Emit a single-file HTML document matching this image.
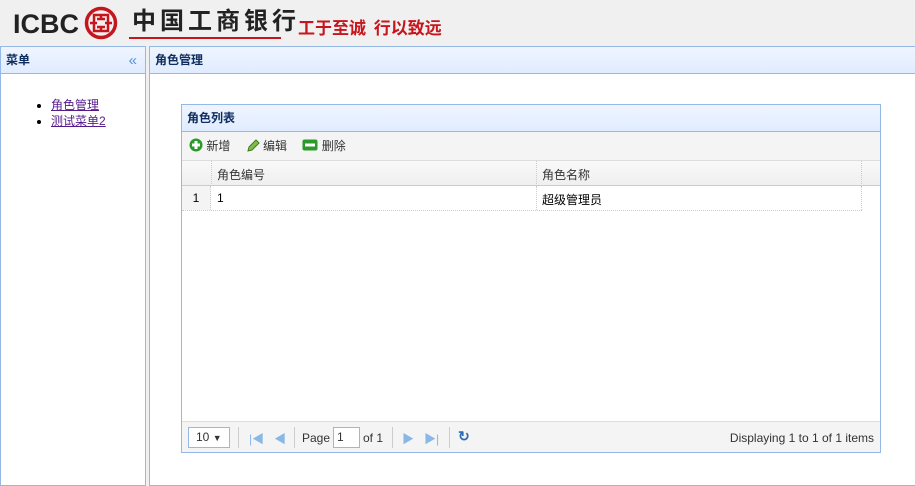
<!DOCTYPE html><html><head><meta charset="utf-8"><style>
*{box-sizing:border-box;margin:0;padding:0}
body{width:915px;height:475px;background:#f0f0f0;font-family:"Liberation Sans","Noto Sans CJK SC",sans-serif;font-size:12px;color:#000;position:relative;overflow:hidden}
.abs{position:absolute}
.ph{background:linear-gradient(#eff5ff,#e0ecff);border-bottom:1px solid #95b8e7;height:27px;line-height:27px;padding-left:5px;font-weight:bold;font-size:12px;color:#0e2d5f}
.panel{border:1px solid #95b8e7;background:#fff}
a{color:#551a8b}
.tb span{margin-right:12px;color:#333}
</style></head><body>
<div class="abs" style="left:13px;top:9px;font:bold 27px 'Liberation Sans',sans-serif;color:#222">ICBC</div>
<svg class="abs" style="left:84px;top:6px" width="34" height="34" viewBox="0 0 34 34"><circle cx="17" cy="17" r="14.5" fill="none" stroke="#c6161d" stroke-width="3.5"/><rect x="10" y="9" width="14" height="16" fill="none" stroke="#c6161d" stroke-width="2.5"/><path d="M6 17h7M21 17h7M17 9v4M17 21v4M13 13h8M13 21h8" stroke="#c6161d" stroke-width="2.5"/></svg>
<div class="abs" style="left:132px;top:1px;font:bold 24px 'Noto Sans CJK SC',sans-serif;color:#222;letter-spacing:4px">中国工商银行</div>
<div class="abs" style="left:129px;top:37px;width:152px;height:2px;background:#c6161d"></div>
<div class="abs" style="left:298px;top:14px;font:bold 17px 'Noto Sans CJK SC',sans-serif;color:#c6161d">工于至诚&nbsp;&nbsp;行以致远</div>

<div class="abs panel" style="left:0;top:46px;width:146px;height:440px">
<div class="ph">菜单<span style="float:right;margin-right:8px;color:#5b8ed6;font-weight:normal;font-size:15px">«</span></div>
<ul style="margin:23px 0 0 50px;line-height:16px">
<li><a href="#">角色管理</a></li><li><a href="#">测试菜单2</a></li></ul>
</div>

<div class="abs panel" style="left:149px;top:46px;width:770px;height:440px">
<div class="ph">角色管理</div>
</div>

<div class="abs panel" style="left:181px;top:104px;width:700px;height:349px">
<div class="ph" style="height:27px">角色列表</div>
<div class="tb" style="height:29px;line-height:28px;background:#f4f4f4;border-bottom:1px solid #ddd;padding-left:7px">
<span><svg width="14" height="14" style="vertical-align:-2px"><circle cx="7" cy="7" r="6.5" fill="#2a9a2a"/><path d="M7 3v8M3 7h8" stroke="#fff" stroke-width="3"/></svg> 新增</span>
<span><svg width="14" height="14" style="vertical-align:-2px"><path d="M2 13l1-4 7-7 3 3-7 7z" fill="#7cc04a" stroke="#3d7a1a"/></svg> 编辑</span>
<span><svg width="16" height="12" style="vertical-align:-1px"><rect x="0.5" y="0.5" width="15" height="11" rx="2" fill="#2a9a2a"/><rect x="3" y="4.5" width="10" height="3" fill="#fff"/></svg> 删除</span>
</div>
<div style="height:25px;background:linear-gradient(#f9f9f9,#efefef);border-bottom:1px solid #ccc;position:relative;width:698px">
<div class="abs" style="left:29px;top:0;height:25px;border-left:1px dotted #ccc"></div>
<div class="abs" style="left:354px;top:0;height:25px;border-left:1px dotted #ccc"></div>
<div class="abs" style="left:679px;top:0;height:25px;border-left:1px dotted #ccc"></div>
<div class="abs" style="left:35px;top:5px;color:#333">角色编号</div>
<div class="abs" style="left:360px;top:5px;color:#333">角色名称</div>
</div>
<div style="height:25px;position:relative;width:680px;border-bottom:1px dotted #ccc">
<div class="abs" style="left:0;top:0;width:29px;height:24px;background:#f4f4f4;border-right:1px dotted #ccc;text-align:center;line-height:24px">1</div>
<div class="abs" style="left:354px;top:0;height:24px;border-left:1px dotted #ccc"></div>
<div class="abs" style="left:679px;top:0;height:24px;border-left:1px dotted #ccc"></div>
<div class="abs" style="left:35px;top:5px">1</div>
<div class="abs" style="left:360px;top:5px">超级管理员</div>
</div>
<div class="abs" style="left:0;bottom:0;width:698px;height:31px;background:#f4f4f4;border-top:1px solid #ddd;font-size:12px;color:#333">
<div class="abs" style="left:6px;top:5px;width:42px;height:21px;border:1px solid #95b8e7;background:#fff;line-height:19px;padding-left:7px">10 <span style="font-size:9px">▼</span></div>
<div class="abs" style="left:56px;top:5px;height:21px;border-left:1px solid #ccc"></div>
<div class="abs" style="left:67px;top:8px;color:#8ab8e6;font-size:12px">|◀&nbsp;&nbsp;&nbsp;◀</div>
<div class="abs" style="left:112px;top:5px;height:21px;border-left:1px solid #ccc"></div>
<div class="abs" style="left:120px;top:9px">Page</div>
<div class="abs" style="left:151px;top:5px;width:27px;height:21px;border:1px solid #95b8e7;background:#fff;padding-left:3px;line-height:19px">1</div>
<div class="abs" style="left:181px;top:9px">of 1</div>
<div class="abs" style="left:210px;top:5px;height:21px;border-left:1px solid #ccc"></div>
<div class="abs" style="left:220px;top:8px;color:#8ab8e6">▶&nbsp;&nbsp;&nbsp;▶|</div>
<div class="abs" style="left:267px;top:5px;height:21px;border-left:1px solid #ccc"></div>
<div class="abs" style="left:276px;top:6px;color:#2b6cb8;font-size:14px;font-weight:bold">↻</div>
<div class="abs" style="right:6px;top:9px">Displaying 1 to 1 of 1 items</div>
</div>
</div>
</body></html>
